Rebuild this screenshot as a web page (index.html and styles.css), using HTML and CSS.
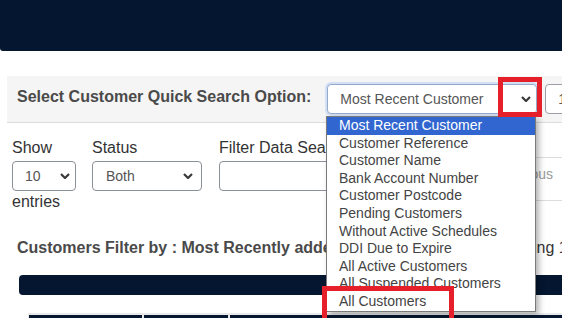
FILE: index.html
```html
<!DOCTYPE html>
<html lang="en">
<head>
<meta charset="utf-8">
<title>Customers</title>
<link rel="stylesheet" href="styles.css">
</head>
<body>
<header class="topbar"></header>
<main class="page">
  <section class="search-panel">
    <span class="panel-label">Select Customer Quick Search Option:</span>
    <div class="fake-select wide focus">
      <span>Most Recent Customer</span>
      <svg class="chev" width="10" height="6" viewBox="0 0 10 6"><polyline points="1,1 5,5 9,1"/></svg>
    </div>
    <div class="text-box">1</div>
  </section>

  <section class="filters">
    <div class="field">
      <span class="lbl">Show</span>
      <div class="fake-select small">
        <span>10</span>
        <svg class="chev" width="10" height="6" viewBox="0 0 10 6"><polyline points="1,1 5,5 9,1"/></svg>
      </div>
      <span class="entries">entries</span>
    </div>
    <div class="field">
      <span class="lbl">Status</span>
      <div class="fake-select status">
        <span>Both</span>
        <svg class="chev" width="10" height="6" viewBox="0 0 10 6"><polyline points="1,1 5,5 9,1"/></svg>
      </div>
    </div>
    <div class="field">
      <span class="lbl">Filter Data Search</span>
      <div class="text-input"></div>
    </div>
    <div class="pager"><span class="pager-btn">Previous</span></div>
  </section>

  <section class="results-head">
    <h2 class="results-title">Customers Filter by : Most Recently added Customers</h2>
    <span class="info">Showing 1 to 10 of 50 entries</span>
  </section>

  <div class="bar"></div>

  <div class="table-head">
    <div class="th c1"></div>
    <div class="th c2"></div>
    <div class="th c3"></div>
  </div>
</main>

<ul class="dropdown">
  <li class="active">Most Recent Customer</li>
  <li>Customer Reference</li>
  <li>Customer Name</li>
  <li>Bank Account Number</li>
  <li>Customer Postcode</li>
  <li>Pending Customers</li>
  <li>Without Active Schedules</li>
  <li>DDI Due to Expire</li>
  <li>All Active Customers</li>
  <li>All Suspended Customers</li>
  <li>All Customers</li>
</ul>

<div class="callout callout-arrow"></div>
<div class="callout callout-all"></div>
</body>
</html>
```

FILE: styles.css
```css
html, body {
  margin: 0;
  padding: 0;
  overflow: hidden;
  background: #ffffff;
}
body {
  font-family: "Liberation Sans", Arial, sans-serif;
  color: #333333;
  position: relative;
  width: 562px;
  height: 318px;
}
.topbar {
  height: 51px;
  background: #041630;
  border-bottom-left-radius: 3px;
}
.page {
  padding-left: 7px;
  margin-top: 25px;
}
.search-panel {
  display: flex;
  align-items: center;
  background: #f5f5f5;
  border-bottom: 1px solid #dddddd;
  padding: 8px 0 8px 10px;
  white-space: nowrap;
}
.panel-label {
  font-size: 16px;
  font-weight: bold;
  line-height: 18px;
  color: #4a4a4a;
  margin-bottom: 4px;
}
.fake-select {
  box-sizing: border-box;
  height: 30px;
  display: flex;
  align-items: center;
  justify-content: space-between;
  background: #ffffff;
  border: 1px solid #8b9096;
  border-radius: 4px;
  font-size: 14px;
  color: #555555;
  flex-shrink: 0;
}
.fake-select .chev polyline {
  fill: none;
  stroke: #3a3a3a;
  stroke-width: 2.2;
}
.fake-select.wide {
  width: 210px;
  margin-left: 16px;
  padding: 0 5px 0 12px;
}
.fake-select.focus {
  border-color: #94a9cc;
  box-shadow: 0 0 0 2px rgba(150, 185, 240, 0.35);
}
.text-box {
  box-sizing: border-box;
  height: 30px;
  width: 200px;
  margin-left: 8px;
  flex-shrink: 0;
  border: 1px solid #9a9ea4;
  border-radius: 4px;
  background: #ffffff;
  font-size: 14px;
  line-height: 28px;
  padding-left: 12px;
  color: #555555;
}
.filters {
  display: flex;
  align-items: flex-start;
  gap: 16px;
  padding-left: 5px;
  margin-top: 16px;
  white-space: nowrap;
}
.field {
  display: flex;
  flex-direction: column;
  align-items: flex-start;
}
.lbl, .entries {
  font-size: 16px;
  line-height: 18px;
  color: #333333;
}
.field .fake-select, .text-input {
  margin-top: 4px;
}
.fake-select.small {
  width: 64px;
  padding: 0 5px 0 12px;
  font-size: 14px;
}
.fake-select.status {
  width: 110px;
  padding: 0 8px 0 13px;
  font-size: 14px;
}
.entries {
  margin-top: 2px;
}
.field + .field + .field {
  margin-left: 1px;
}
.text-input {
  box-sizing: border-box;
  width: 250px;
  height: 30px;
  border: 1px solid #8b9096;
  border-radius: 4px;
  background: #ffffff;
}
.pager {
  margin-left: auto;
  margin-top: 18px;
}
.pager-btn {
  display: block;
  border-top: 1px solid #dddddd;
  border-bottom: 1px solid #dddddd;
  padding: 8px 9px 18px 12px;
  font-size: 14px;
  line-height: 16px;
  color: #9a9a9a;
}
.results-head {
  display: grid;
  grid-template-columns: 476px 1fr;
  padding-left: 10px;
  margin-top: 28px;
  white-space: nowrap;
}
.results-title {
  margin: 0;
  font-size: 16px;
  font-weight: bold;
  line-height: 18px;
  color: #4a4a4a;
}
.info {
  font-size: 16px;
  line-height: 18px;
  color: #333333;
}
.bar {
  height: 20px;
  margin: 18px 0 0 12px;
  background: #041630;
  border-radius: 4px 0 0 4px;
}
.table-head {
  display: flex;
  gap: 2px;
  margin: 18px 0 0 21px;
  padding: 2px 0 0 1px;
  background: #e8e8e8;
}
.th {
  height: 20px;
  background: #041630;
}
.th.c1 { width: 113px; }
.th.c2 { width: 84px; }
.th.c3 { flex: 1; }

.dropdown {
  position: absolute;
  left: 326px;
  top: 116px;
  width: 210px;
  box-sizing: border-box;
  margin: 0;
  padding: 0;
  list-style: none;
  background: #ffffff;
  border: 1px solid #7a7a7a;
  box-shadow: 3px 3px 6px rgba(0, 0, 0, 0.3);
  font-size: 14px;
  line-height: 17.6px;
  color: #444444;
  white-space: nowrap;
}
.dropdown li {
  padding-left: 12px;
}
.dropdown li.active {
  background: #3166d0;
  color: #ffffff;
}
.callout {
  position: absolute;
  box-sizing: border-box;
  border: 5px solid #e5202a;
}
.callout-arrow {
  left: 498px;
  top: 77px;
  width: 44px;
  height: 40px;
}
.callout-all {
  left: 322px;
  top: 286px;
  width: 132px;
  height: 40px;
}
```
